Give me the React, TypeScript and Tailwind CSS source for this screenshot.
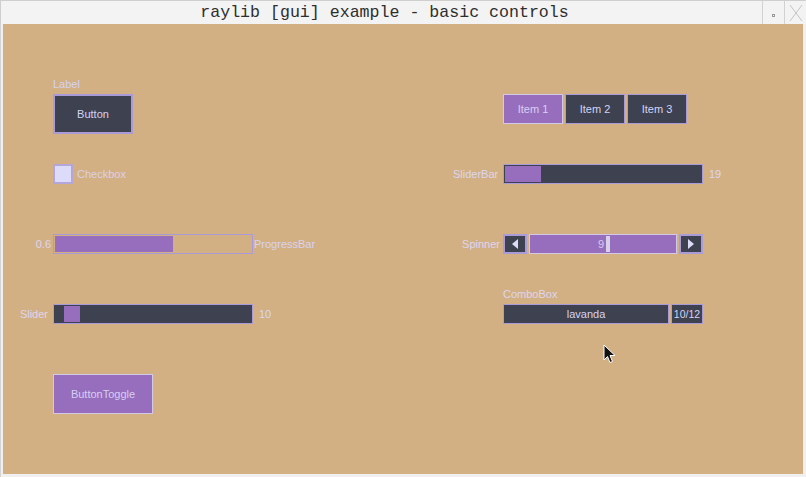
import React from "react";

const font = { fontFamily: '"Liberation Sans", Arial, sans-serif' };

const Cursor = () => (
  <svg width="14" height="20" viewBox="0 0 14 20" className="absolute left-[600px] top-[320px]">
    <path d="M1 1 L1 16 L4.5 12.5 L7 18.5 L9.5 17.5 L7 11.5 L12 11.5 Z" fill="#111" stroke="#fff" strokeWidth="1" />
  </svg>
);

const App = () => {
  return (
    <div className="w-[806px] h-[477px] bg-[#b9b9b9] flex flex-col overflow-hidden" style={font}>
      {/* title bar */}
      <div className="h-[24px] bg-[#f3f3f3] border-t border-l border-[#cfcfcf] flex items-center relative">
        <div
          className="flex-1 text-center text-[16.6px] text-[#2e2e2e] leading-[24px] pl-[6px]"
          style={{ fontFamily: '"Liberation Mono", "DejaVu Sans Mono", monospace' }}
        >
          raylib [gui] example - basic controls
        </div>
        <div className="flex h-full items-stretch">
          <div className="w-[22px] border-l border-[#d2d2d2] flex items-center justify-center">
            <div className="w-[3px] h-[3px] border border-[#9a9a9a] mt-[6px]" />
          </div>
          <div className="w-[22px] border-l border-[#d2d2d2] flex items-center justify-center">
            <svg width="16" height="20" viewBox="0 0 16 20">
              <path d="M2 2 L14 18 M14 2 L2 18" stroke="#c4c4c4" strokeWidth="1" fill="none" />
            </svg>
          </div>
        </div>
      </div>

      {/* body */}
      <div className="flex-1 flex bg-[#f0f0f0] pl-[2px] pr-[2px] pb-[2px] border-l border-[#d4d4d4]">
        <div className="w-[800px] h-[450px] bg-[#d3b083] relative flex text-[11px] leading-[12px]">
          {/* left column */}
          <div className="w-[450px] flex flex-col pt-[54px]">
            <div className="pl-[50px] h-[12px] text-[#d6d2f2]">Label</div>
            <div className="pl-[50px] mt-[4px]">
              <div className="w-[80px] h-[40px] border-2 border-[#a99bd8] bg-[#3d4150] flex items-center justify-center text-[#d4d3f5]">
                Button
              </div>
            </div>
            <div className="pl-[50px] mt-[30px] flex items-center h-[20px]">
              <div className="w-[20px] h-[20px] border-2 border-[#b5a6da] bg-[#dcdcfa]" />
              <span className="ml-[4px] text-[#dccfe6]">Checkbox</span>
            </div>
            <div className="mt-[50px] flex items-center h-[20px]">
              <div className="w-[50px] text-right pr-[2px] text-[#dcd6f0]">0.6</div>
              <div className="w-[200px] h-[20px] border border-[#a99bd8] p-[1px]">
                <div className="w-[118px] h-full bg-[#976ebd]" />
              </div>
              <span className="ml-[1px] text-[#d9d2f2]">ProgressBar</span>
            </div>
            <div className="mt-[50px] flex items-center h-[20px]">
              <div className="w-[50px] text-right pr-[5px] text-[#dcd6f0]">Slider</div>
              <div className="w-[200px] h-[20px] border border-[#a99bd8] bg-[#3d4150] p-[1px] pl-[10px]">
                <div className="w-[16px] h-full bg-[#976ebd]" />
              </div>
              <span className="ml-[6px] text-[#dcd6f0]">10</span>
            </div>
            <div className="pl-[50px] mt-[50px]">
              <div className="w-[100px] h-[40px] border border-[#d2c9e6] bg-[#976ebd] flex items-center justify-center text-[#d6cff3]">
                ButtonToggle
              </div>
            </div>
          </div>

          {/* right column */}
          <div className="flex flex-col pt-[70px]">
            <div className="pl-[50px] flex gap-[2px]">
              <div className="w-[60px] h-[30px] border border-[#d2c9e6] bg-[#976ebd] flex items-center justify-center text-[#d8d0f4]">
                Item 1
              </div>
              <div className="w-[60px] h-[30px] border border-[#a99bd8] bg-[#3d4150] flex items-center justify-center text-[#d4d3f5]">
                Item 2
              </div>
              <div className="w-[60px] h-[30px] border border-[#a99bd8] bg-[#3d4150] flex items-center justify-center text-[#d4d3f5]">
                Item 3
              </div>
            </div>
            <div className="mt-[40px] flex items-center h-[20px]">
              <div className="w-[50px] text-right pr-[6px] text-[#dcd6f0]">SliderBar</div>
              <div className="w-[200px] h-[20px] border border-[#a99bd8] bg-[#3d4150] p-[1px]">
                <div className="w-[36px] h-full bg-[#976ebd]" />
              </div>
              <span className="ml-[6px] text-[#dcd6f0]">19</span>
            </div>
            <div className="mt-[50px] flex items-center h-[20px]">
              <div className="w-[50px] text-right pr-[3px] text-[#dcd6f0]">Spinner</div>
              <div className="w-[200px] h-[20px] flex gap-[2px]">
                <div className="w-[24px] h-[20px] border-2 border-[#a99bd8] bg-[#3d4150] flex items-center justify-center">
                  <svg width="6" height="10" viewBox="0 0 6 10">
                    <path d="M6 0 L0 5 L6 10 Z" fill="#dcdcf6" />
                  </svg>
                </div>
                <div className="w-[148px] h-[20px] border border-[#d2c9e6] bg-[#976ebd] flex items-center justify-center text-[#d4ccf2]">
                  <span className="ml-[2px]">9</span>
                  <div className="w-[4px] h-[16px] bg-[#d6d0e8] ml-[2px]" />
                </div>
                <div className="w-[24px] h-[20px] border-2 border-[#a99bd8] bg-[#3d4150] flex items-center justify-center">
                  <svg width="6" height="10" viewBox="0 0 6 10">
                    <path d="M0 0 L6 5 L0 10 Z" fill="#dcdcf6" />
                  </svg>
                </div>
              </div>
            </div>
            <div className="pl-[50px] mt-[34px] h-[12px] text-[#dcd6f0]">ComboBox</div>
            <div className="pl-[50px] mt-[4px] flex gap-[2px]">
              <div className="w-[166px] h-[20px] border border-[#a99bd8] bg-[#3d4150] flex items-center justify-center text-[#d4d3f5]">
                lavanda
              </div>
              <div className="w-[32px] h-[20px] border border-[#a99bd8] bg-[#3d4150] flex items-center justify-center text-[#d4d3f5] text-[10.5px]">
                10/12
              </div>
            </div>
          </div>

          <Cursor />
        </div>
      </div>
    </div>
  );
};

export default App;
